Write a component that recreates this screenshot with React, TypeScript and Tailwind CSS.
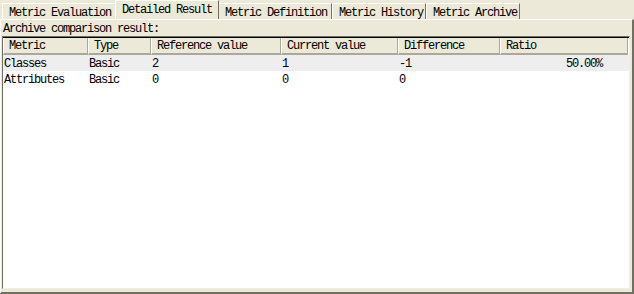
import React from 'react';

const tabs = [
  { label: 'Metric Evaluation', w: 'w-[114px]' },
  { label: 'Detailed Result', w: 'w-[104px]', active: true },
  { label: 'Metric Definition', w: 'w-[114px]' },
  { label: 'Metric History', w: 'w-[94px]' },
  { label: 'Metric Archive', w: 'w-[94px]' },
];

const cols = [
  { name: 'Metric', w: 'w-[85px]' },
  { name: 'Type', w: 'w-[63px]' },
  { name: 'Reference value', w: 'w-[130px]' },
  { name: 'Current value', w: 'w-[117px]' },
  { name: 'Difference', w: 'w-[102px]' },
  { name: 'Ratio', w: 'w-[128px]' },
];

const rows = [
  { cells: ['Classes', 'Basic', '2', '1', '-1'], ratio: '50.00%', shade: true },
  { cells: ['Attributes', 'Basic', '0', '0', '0'], ratio: '', shade: false },
];

export default function App() {
  return (
    <div className="w-[634px] h-[294px] bg-[#ECE9D8] flex flex-col text-[12px] leading-none tracking-[-1.2px] text-black font-['Liberation_Mono',monospace] overflow-hidden">
      {/* tab strip */}
      <div className="h-[19px] flex items-end pl-[2px] shrink-0">
        {tabs.map((t) =>
          t.active ? (
            <div
              key={t.label}
              className={`${t.w} h-[19px] -mx-[1px] relative z-10 bg-[#ECE9D8] border-t border-l border-white border-r border-r-[#716F64] flex items-start pt-[3px] pl-[6px]`}
            >
              {t.label}
            </div>
          ) : (
            <div
              key={t.label}
              className={`${t.w} h-[16px] border-t border-l border-white border-r border-r-[#716F64] flex items-center pl-[6px] pt-[2px]`}
            >
              {t.label}
            </div>
          )
        )}
      </div>

      {/* tab page */}
      <div className="flex-1 flex flex-col border-t border-l border-white border-r-2 border-r-[#716F64] border-b-2 border-b-[#716F64] min-h-0">
        <div className="h-[16px] flex items-center pl-[2px] pt-[1px] shrink-0">Archive comparison result:</div>

        <div className="flex-1 ml-[1px] mr-[2px] mb-[3px] bg-white border-t border-l border-[#716F64] border-r border-b border-r-[#F1EFE2] border-b-[#F1EFE2] flex flex-col min-h-0">
          {/* header */}
          <div className="flex h-[18px] border-t border-black shrink-0">
            {cols.map((c) => (
              <div
                key={c.name}
                className={`${c.w} shrink-0 bg-[#ECE9D8] border-l border-white border-r border-r-[#ACA899] border-b-2 border-b-[#ACA899] flex items-center pl-[5px] pt-[1px]`}
              >
                {c.name}
              </div>
            ))}
          </div>

          {rows.map((r) => (
            <div key={r.cells[0]} className={`flex h-[16px] items-center pt-[1px] ${r.shade ? 'bg-[#EEEEEE]' : ''}`}>
              {r.cells.map((v, i) => (
                <div key={i} className={`${cols[i].w} shrink-0 pl-[1px]`}>
                  {v}
                </div>
              ))}
              <div className={`${cols[5].w} shrink-0 text-right pr-[26px]`}>{r.ratio}</div>
            </div>
          ))}
        </div>
      </div>
    </div>
  );
}
